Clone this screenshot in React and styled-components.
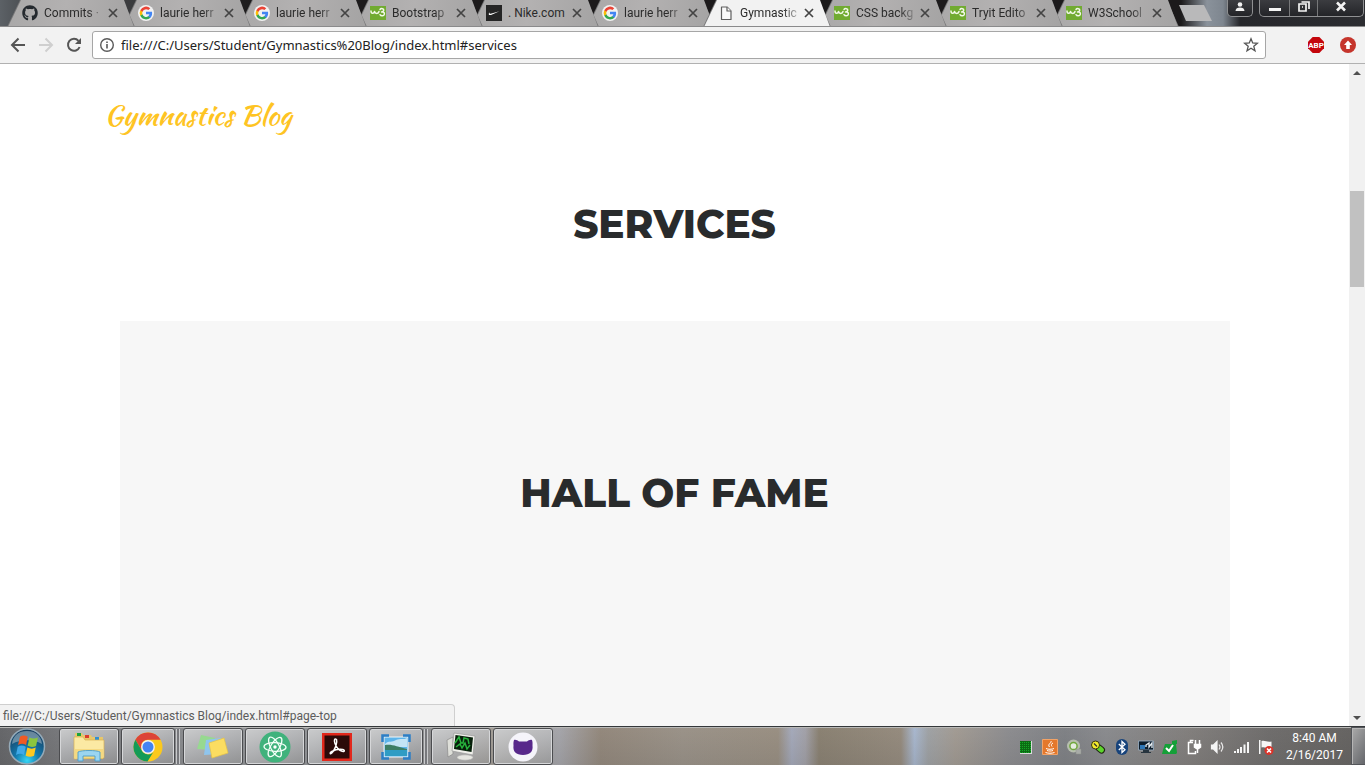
import React from 'react';
import styled, { createGlobalStyle, css } from 'styled-components';
import { FaGithub } from 'react-icons/fa';

const UI_FONT = 'Roboto, "Noto Sans", sans-serif';
const ADDRESS_FONT = '"Noto Sans", "Open Sans", sans-serif';
const HEADING_FONT = 'Montserrat, Inter, "Liberation Sans", sans-serif';
const SCRIPT_FONT = '"Kaushan Script", Lato, "Liberation Sans", cursive';

const GlobalStyle = createGlobalStyle`
  *, *::before, *::after { box-sizing: border-box; }
  body { margin: 0; background: #fff; font-family: ${UI_FONT}; }
  button { padding: 0; border: 0; background: none; font: inherit; color: inherit; }
  h2 { margin: 0; }
  svg { display: block; flex: none; }
`;

const Desktop = styled.div`
  min-height: 100vh;
  display: flex;
  flex-direction: column;
`;

/* ---------- Tab strip ---------- */

const TitleBar = styled.header`
  height: 27px;
  display: flex;
  align-items: stretch;
  padding-left: 7px;
  overflow: hidden;
  background:
    linear-gradient(90deg, #5c6166 0, #4d5155 20px, #38393b 140px, transparent 260px),
    linear-gradient(270deg, #2c2d31 0, #26272b 125px, #7e868f 142px, #8a929b 158px, #1c1a1b 184px, #1c1a1b 100%);
  border-bottom: 1px solid #8a8a8b;
`;

const Tabs = styled.nav`
  display: flex;
  min-width: 0;
`;

const TabBox = styled.div`
  position: relative;
  z-index: ${(p) => (p.$active ? 20 : p.$order)};
  flex: none;
  width: 128px;
  height: 27px;
  margin-right: -12px;
  padding: 0 14px 2px 15px;
  display: flex;
  align-items: center;
  isolation: isolate;

  &::before, &::after {
    content: '';
    position: absolute;
    z-index: -1;
    inset: 0;
    clip-path: polygon(0 100%, 13px 0, 116px 0, 100% 100%);
    background: #777778;
  }
  &::after {
    left: 1px;
    right: 1px;
    background: ${(p) =>
      p.$active ? '#f2f2f2' : 'linear-gradient(100deg, #a9a8a8, #b3b1b1 45%, #a4a3a3)'};
  }
`;

const TabLabel = styled.button`
  display: flex;
  align-items: center;
  gap: 6px;
  flex: 1;
  min-width: 0;
  height: 24px;
  font-size: 12px;
  line-height: 16px;
  color: #2b2b2b;
  text-align: left;
`;

const TabTitle = styled.span`
  flex: 1;
  overflow: hidden;
  white-space: nowrap;
  ${(p) =>
    p.$fade &&
    css`
      mask-image: linear-gradient(90deg, #000 70%, rgba(0, 0, 0, 0.1));
    `}
`;

const CloseButton = styled.button`
  flex: none;
  width: 16px;
  height: 16px;
  display: grid;
  place-items: center;
`;

const NewTab = styled.button`
  flex: none;
  width: 33px;
  height: 16px;
  margin: 5px 0 0 12px;
  background: #b9b9ba;
  clip-path: polygon(0 0, 25px 0, 100% 100%, 7px 100%);
`;

const WindowControls = styled.div`
  display: flex;
  align-items: flex-start;
  gap: 6px;
  margin-left: auto;
  padding-right: 1px;
`;

const ControlGroup = styled.div`
  display: flex;
  height: 17px;
  border: 1px solid #8f9092;
  border-top: 0;
  border-radius: 0 0 5px 5px;
  overflow: hidden;
  background: linear-gradient(#3b3c40, #232428);
`;

const ControlButton = styled.button`
  width: ${(p) => (p.$size === 'wide' ? 46 : p.$size === 'mid' ? 28 : p.$size === 'min' ? 29 : 24)}px;
  display: grid;
  place-items: center;
  padding-bottom: 4px;
  & + & { border-left: 1px solid #77787a; }
`;

/* ---------- Toolbar ---------- */

const Toolbar = styled.div`
  height: 37px;
  display: flex;
  align-items: center;
  padding: 0 9px 0 4px;
  background: #f2f2f2;
  border-bottom: 1px solid #b1b1b1;
`;

const NavButton = styled.button`
  flex: none;
  width: 28px;
  height: 28px;
  display: grid;
  place-items: center;
  color: ${(p) => (p.disabled ? '#cfcfcf' : '#555')};
`;

const AddressBar = styled.form`
  flex: 1;
  min-width: 0;
  height: 28px;
  display: flex;
  align-items: center;
  gap: 6px;
  margin: 0 42px 0 4px;
  padding: 0 6px;
  background: #fff;
  border: 1px solid #a6a6a6;
  border-radius: 3px;
`;

const AddressInput = styled.input`
  flex: 1;
  min-width: 0;
  padding: 0;
  border: 0;
  outline: 0;
  background: none;
  color: #222;
  font: 13px/20px ${ADDRESS_FONT};
`;

const Extensions = styled.div`
  display: flex;
  gap: 16px;
`;

const BareButton = styled.button`
  display: grid;
  place-items: center;
`;

/* ---------- Web page ---------- */

const Viewport = styled.div`
  position: relative;
  flex: 1;
  display: flex;
`;

const Page = styled.main`
  flex: 1;
  min-width: 0;
  display: flex;
  flex-direction: column;
  padding-top: 30px;
  background: #fff;
`;

const Container = styled.div`
  width: 100%;
  max-width: 1170px;
  margin: 0 auto;
  padding: 0 15px;
  line-height: 42px;
`;

const Brand = styled.a`
  display: inline-block;
  vertical-align: top;
  color: #fec423;
  font: 400 28px/42px ${SCRIPT_FONT};
  text-decoration: none;
`;

const SectionHeading = styled.h2`
  color: #292b2c;
  text-align: center;
  font: 800 39px/44px ${HEADING_FONT};
`;

const Services = styled.section`
  padding: 66px 0 75px;
`;

const HallOfFame = styled.section`
  flex: 1;
  width: 100%;
  max-width: 1110px;
  margin: 0 auto;
  padding: 150px 0 64px;
  background: #f7f7f7;
`;

const ScrollTrack = styled.div`
  flex: none;
  width: 16px;
  display: flex;
  flex-direction: column;
  align-items: stretch;
  background: #f1f1f1;
`;

const ScrollArrow = styled.button`
  height: 17px;
  display: grid;
  place-items: center;
`;

const ScrollRail = styled.div`
  flex: 1;
  padding: 110px 1px 0;
`;

const ScrollThumb = styled.div`
  height: 96px;
  background: #c1c1c1;
`;

const StatusBubble = styled.div`
  position: absolute;
  left: 0;
  bottom: 0;
  width: calc(100% / 3);
  height: 22px;
  padding: 0 3px;
  background: #f2f2f2;
  border: solid #cfcfcf;
  border-width: 1px 1px 0 0;
  border-radius: 0 4px 0 0;
  color: #5c5c5c;
  font-size: 12px;
  line-height: 22px;
  white-space: nowrap;
  overflow: hidden;
`;

/* ---------- Taskbar ---------- */

const Taskbar = styled.footer`
  height: 39px;
  display: flex;
  align-items: stretch;
  border-top: 1px solid #35383b;
  box-shadow: inset 0 1px 0 #b9b9b7;
  background:
    linear-gradient(transparent, rgba(60, 60, 60, 0.12)),
    linear-gradient(90deg,
      #66676a 0, #7b7c7f 5%, #97999c 20%, #8c8e92 30%, #a39e97 36%, #a6a6ab 41%,
      #94897d 44%, #9b9389 50%, #9a9083 57%, #a5aabb 58%, #a3a2a9 59%, #8b8273 60%,
      #968c7f 66%, #a9b8cf 67%, #a0a3a6 68%, #a39c94 70%, #8d8d90 74%, #808286 78%,
      #8b8c8f 81%, #83807e 87%, #706e6d 93%, #656361 100%);
`;

const StartButton = styled.button`
  width: 54px;
  flex: none;
  display: grid;
  place-items: center;
`;

const TaskList = styled.div`
  display: flex;
  gap: 2px;
  padding: 1px 0 0 5px;
`;

const TaskButton = styled.button`
  position: relative;
  flex: none;
  width: 60px;
  display: grid;
  place-items: center;
  border: 1px solid #4b4c4f;
  border-radius: 3px;
  box-shadow: inset 0 0 0 1px #d6d7d9;
  background: linear-gradient(160deg, #cacbcc, rgba(185, 186, 188, 0.75) 50%, rgba(150, 150, 150, 0.6));
  ${(p) =>
    p.$stacked &&
    css`
      width: 54px;
      margin-right: 6px;
      &::after {
        content: '';
        position: absolute;
        top: 0;
        bottom: 0;
        right: -6px;
        width: 4px;
        border: solid #c9cacc;
        border-width: 0 1px;
        background: #77787c;
      }
    `}
`;

const Tray = styled.div`
  display: flex;
  align-items: center;
  gap: 8px;
  margin-left: auto;
  padding-top: 1px;
`;

const Clock = styled.time`
  width: 77px;
  padding: 3px 0 0 4px;
  text-align: center;
  color: #fff;
  font-size: 12px;
  line-height: 17px;
  white-space: nowrap;
`;

const ShowDesktop = styled.button`
  width: 14px;
  border: 1px solid #54565a;
  border-right: 0;
  box-shadow: inset 1px 1px 0 #b5b5b5;
  background: linear-gradient(120deg, #aaa, #64666a);
`;

/* ---------- Icons ---------- */

const GoogleIcon = () => (
  <svg width="16" height="16" viewBox="0 0 18 18">
    <circle cx="9" cy="9" r="9" fill="#f2f2f2" />
    <g transform="translate(1.8 1.8) scale(.8)">
      <path fill="#4285f4" d="M17.6 9.2c0-.6-.1-1.2-.2-1.8H9v3.5h4.8a4.1 4.1 0 0 1-1.8 2.7v2.3h2.9c1.7-1.6 2.7-3.9 2.7-6.7z" />
      <path fill="#34a853" d="M9 18c2.4 0 4.5-.8 6-2.2l-3-2.2A5.4 5.4 0 0 1 4 10.7H1V13a9 9 0 0 0 8 5z" />
      <path fill="#fbbc05" d="M4 10.7a5.4 5.4 0 0 1 0-3.4V5H1a9 9 0 0 0 0 8z" />
      <path fill="#ea4335" d="M9 3.6c1.3 0 2.5.5 3.4 1.3L15 2.3A9 9 0 0 0 1 5l3 2.3A5.4 5.4 0 0 1 9 3.6z" />
    </g>
  </svg>
);

const W3Icon = () => (
  <svg width="16" height="16" viewBox="0 0 16 16">
    <path fill="#71ab31" d="M0 1h16v14H0z" />
    <g fill="none" stroke="#f2f8e8" strokeWidth="1.5" strokeLinecap="round" strokeLinejoin="round">
      <path d="M1 6c0 3 3 3 3.500.500C5 9 8.500 9 9 6.500" />
      <path d="M10 4.500c1-1.500 4-1 3.800.800-.1 1.200-1.300 1.500-2.300 1.600 2-.2 3.300.800 2.800 2.500-.5 1.800-3.300 2-4.300.300" />
    </g>
  </svg>
);

const NikeIcon = () => (
  <svg width="16" height="16" viewBox="0 0 16 16">
    <path fill="#252525" d="M0 0h16v16H0z" />
    <path fill="#fff" d="M3.500 7.200C2.200 9 2.500 10.600 5 9.900L13.500 6.200 5.500 8.600C3.900 9 3.200 8.400 3.500 7.200z" />
  </svg>
);

const FileIcon = () => (
  <svg width="16" height="16" viewBox="0 0 16 16" fill="#fafafa" stroke="#5f5f5f" strokeWidth="1.200" strokeLinejoin="round">
    <path d="M3.500 2h5.500l4 4v8.500H3.500z" />
    <path d="M9 2v4h4" />
  </svg>
);

const OctocatIcon = () => <FaGithub size={16} color="#24292e" />;

const CloseIcon = () => (
  <svg width="10" height="10" viewBox="0 0 10 10" stroke="#444" strokeWidth="1.700">
    <path d="M1 1l8 8M9 1L1 9" />
  </svg>
);

const BackIcon = () => (
  <svg width="16" height="16" viewBox="0 0 16 16" fill="none" stroke="currentColor" strokeWidth="2">
    <path d="M15 8H2.500M8.500 1.500L2 8l6.500 6.500" />
  </svg>
);

const ForwardIcon = () => (
  <svg width="16" height="16" viewBox="0 0 16 16" fill="none" stroke="currentColor" strokeWidth="2">
    <path d="M1 8h12.500M7.500 1.500L14 8l-6.500 6.500" />
  </svg>
);

const ReloadIcon = () => (
  <svg width="16" height="16" viewBox="0 0 16 16">
    <path fill="none" stroke="currentColor" strokeWidth="2" d="M13.600 10A6 6 0 1 1 12.500 3.800" />
    <path fill="currentColor" d="M15 1v6H9z" />
  </svg>
);

const InfoIcon = () => (
  <svg width="16" height="16" viewBox="0 0 16 16">
    <circle cx="8" cy="8" r="6.300" fill="none" stroke="#5a5a5a" strokeWidth="1.400" />
    <path fill="#5a5a5a" d="M7.200 7h1.600v4.500H7.200zM7.200 4.400h1.600V6H7.200z" />
  </svg>
);

const StarIcon = () => (
  <svg width="16" height="16" viewBox="0 0 16 16" fill="none" stroke="#555" strokeWidth="1.300">
    <path d="M8 1.800l1.700 4.200 4.700.3-3.600 3 1.200 4.500L8 11.300l-4 2.500 1.200-4.500-3.600-3 4.700-.3z" />
  </svg>
);

const AdblockIcon = () => (
  <svg width="16" height="16" viewBox="0 0 16 16">
    <path fill="#c4060c" d="M4.700 0h6.600L16 4.700v6.600L11.300 16H4.700L0 11.300V4.700z" />
    <text x="8" y="11" fill="#fff" fontSize="8" fontWeight="700" textAnchor="middle" fontFamily="Roboto">ABP</text>
  </svg>
);

const UpdateIcon = () => (
  <svg width="16" height="16" viewBox="0 0 16 16">
    <circle cx="8" cy="8" r="8" fill="#c5352c" />
    <path fill="#fff" d="M8 3.500l4 4.500H9.800v4H6.200V8H4z" />
  </svg>
);

const PersonIcon = () => (
  <svg width="12" height="11" viewBox="0 0 12 11" fill="#f1f1f1">
    <circle cx="6" cy="3.500" r="2.300" />
    <path d="M1.500 10c0-2.500 2-3.500 4.500-3.500s4.500 1 4.500 3.500z" />
  </svg>
);

const MinimizeIcon = () => (
  <svg width="12" height="11" viewBox="0 0 12 11"><path fill="#f4f4f4" d="M0 7h12v3H0z" /></svg>
);

const RestoreIcon = () => (
  <svg width="12" height="11" viewBox="0 0 12 11" fill="none" stroke="#f4f4f4" strokeWidth="1.700">
    <path d="M1 3h7v7H1zM3.500 1h7.500v7M4 6h1" />
  </svg>
);

const WindowCloseIcon = () => (
  <svg width="12" height="11" viewBox="0 0 12 11" stroke="#f4f4f4" strokeWidth="2.600">
    <path d="M2 1.500l8 8M10 1.500l-8 8" />
  </svg>
);

const ArrowGlyph = ({ down }) => (
  <svg width="8" height="4" viewBox="0 0 8 4">
    <path fill="#505050" d={down ? 'M0 0h8L4 4z' : 'M0 4h8L4 0z'} />
  </svg>
);

const StartIcon = () => (
  <svg width="38" height="37" viewBox="0 0 38 37">
    <defs>
      <radialGradient id="orb" cx=".5" cy=".9" r=".85">
        <stop offset="0" stopColor="#36d6f5" />
        <stop offset=".4" stopColor="#147aae" />
        <stop offset="1" stopColor="#153c5e" />
      </radialGradient>
    </defs>
    <circle cx="19" cy="18.500" r="17.500" fill="url(#orb)" stroke="#95aab8" strokeWidth="1.500" />
    <path fill="#9eb4c2" opacity=".6" d="M4 16C5 7 11 3 19 3s14 4 15 13c-9-5-21-5-30 0z" />
    <g transform="translate(-1.500 -2.500) scale(1.120)">
      <path fill="#ef5a24" d="M12 10c2.500-1.600 4.500-1.400 7 0l-1.500 7.500c-2.500-1.500-4.700-1.500-7.200 0z" />
      <path fill="#8cc63e" d="M20.500 10.700c2.600 1.300 5 1.400 7.500 0l-1.600 7.500c-2.500 1.200-5 1.200-7.500-.1z" />
      <path fill="#3fa9e8" d="M10 19c2.500-1.500 4.700-1.400 7.200 0l-1.600 7.300c-2.500-1.500-4.600-1.500-7.100 0z" />
      <path fill="#fdc820" d="M18.600 19.700c2.600 1.300 5 1.400 7.500 0L24.600 27c-2.500 1.300-5 1.200-7.500-.1z" />
    </g>
  </svg>
);

const ExplorerIcon = () => (
  <svg width="32" height="31" viewBox="0 0 32 31">
    <path fill="#e8c76a" d="M2 2h7l1 2h8l1 2h11v22H2z" />
    <path fill="#19a33d" d="M4 2h4v3H4z" />
    <path fill="#d93d2e" d="M12 4h4v3h-4z" />
    <path fill="#318fd1" d="M22 6h4v3h-4z" />
    <path fill="#fbe9a3" stroke="#d8b354" strokeWidth=".700" d="M1 6h9l2 3h19v18l-30 1z" />
    <path fill="#f5d980" d="M2 18h28v9H2z" />
    <path fill="#9bd5f0" stroke="#4c9cc8" strokeWidth=".900" d="M5 21c3-2 19-2 22 0v9h-5v-5H10v5H5z" />
  </svg>
);

const ChromeIcon = () => (
  <svg width="30" height="30" viewBox="0 0 30 30">
    <circle cx="15" cy="15" r="14.500" fill="#fbc91d" />
    <path fill="#dc4437" d="M2.400 7.700A14.500 14.500 0 0 1 27.600 7.700H15a7.200 7.200 0 0 0-6.600 4.300L8.600 18.200z" />
    <path fill="#149b57" d="M2.400 7.700A14.500 14.500 0 0 0 14.500 29.500L21.300 18.500a7 7 0 0 1-12.500.100z" />
    <circle cx="15" cy="15" r="6.900" fill="#f3f3f3" />
    <circle cx="15" cy="15" r="5.500" fill="#4384f3" />
  </svg>
);

const NotesIcon = () => (
  <svg width="34" height="30" viewBox="0 0 34 30">
    <path fill="#97d990" d="M5 3l14 3-2 12-16-1z" />
    <path fill="#90c5ed" d="M10 8l15-2-2 16-15 1z" />
    <path fill="#fbdd61" stroke="#e6c345" strokeWidth=".700" d="M13 11l15-5 4 15-16 5z" />
  </svg>
);

const AtomIcon = () => (
  <svg width="32" height="32" viewBox="0 0 32 32">
    <circle cx="16" cy="16" r="15.500" fill="#40b27c" />
    <g fill="none" stroke="#f3fff8" strokeWidth="1.300">
      <ellipse cx="16" cy="16" rx="4.300" ry="11" transform="rotate(-28 16 16)" />
      <ellipse cx="16" cy="16" rx="4.300" ry="11" transform="rotate(32 16 16)" />
      <ellipse cx="16" cy="16" rx="4.300" ry="11" transform="rotate(92 16 16)" />
    </g>
    <circle cx="16" cy="16" r="1.700" fill="#fff" />
  </svg>
);

const AcrobatIcon = () => (
  <svg width="30" height="28" viewBox="0 0 30 28">
    <path fill="#e2281c" d="M0 0h30v28H0z" />
    <path fill="#2c0a09" d="M2.500 2.500h25v23h-25z" />
    <path fill="none" stroke="#fff" strokeWidth="1.500" d="M14.500 6.500c-1.800-1.600-2.700.500-1.600 3.800 1.400 4 4.300 7.200 7.300 8.100 2.600.7 2.900-1.500.400-1.900-3.500-.5-7.700.4-10.800 2-2.600 1.400-1.700 3.200 0 1.500 3-3.200 6-10 4.700-13.500z" />
  </svg>
);

const PhotoIcon = () => (
  <svg width="30" height="26" viewBox="0 0 30 26">
    <path fill="#5db4ea" stroke="#f3f7f8" d="M3 3h24v20H3z" />
    <path fill="#c4e4f5" d="M4 10c4-4 7-1 11-4 4-2 8 0 11-2v9H4z" />
    <path fill="#3d7e65" d="M4 11c8-1 12 2 22 4v2H4z" />
    <path fill="#2f9cc4" d="M4 16h22v6H4z" />
    <path fill="none" stroke="#2c7fc6" strokeWidth="2.500" d="M1.500 8V1.500H8M22 1.500h6.500V8M28.500 18v6.500H22M8 24.500H1.500V18" />
  </svg>
);

const MonitorIcon = () => (
  <svg width="32" height="30" viewBox="0 0 32 30">
    <path fill="#dedfd9" stroke="#888" strokeWidth=".700" d="M2 8l6-3v17l-5 3z" />
    <path fill="#efefea" stroke="#999" strokeWidth=".700" d="M9 1l21 3-2 19-21-4z" />
    <path fill="#07200b" d="M10.500 3l17.500 2.500L26.500 20 9 17z" />
    <path fill="none" stroke="#27b43c" strokeWidth="1.500" d="M10 11l4-6 2 6h2l1-5 4 1 1 5M11 15l4-3 2 4 3-5 2 6 3-4" />
    <ellipse cx="20" cy="25.500" rx="8" ry="2.700" fill="#e5e5e0" stroke="#aaa" strokeWidth=".600" />
  </svg>
);

const DesktopCatIcon = () => (
  <svg width="30" height="30" viewBox="0 0 30 30">
    <circle cx="15" cy="15" r="14.500" fill="#f5f4fa" />
    <path fill="#58288b" d="M6 8c2-.5 3.500.5 5 1.500h8c1.500-1 3-2 5-1.500.7 2 .6 3.500.5 5.500.8 6-2.500 9.500-9.500 9.500s-10.300-3.500-9.500-9.500C5.400 11.500 5.300 10 6 8z" />
  </svg>
);

const MeterIcon = () => (
  <svg width="16" height="16" viewBox="0 0 16 16">
    <path fill="#0b6a14" d="M2 2h11v12H2z" />
    <path stroke="#dadada" d="M13.500 2v12.500M2 14.500h12" />
    <path stroke="#15a827" strokeDasharray="1 1" d="M2 3.500h11M2 5.500h11M2 7.500h11M2 9.500h11M2 11.500h11M2 13.500h11" />
  </svg>
);

const JavaIcon = () => (
  <svg width="16" height="16" viewBox="0 0 16 16">
    <path fill="#e4782c" stroke="#f2a367" d="M.5.500h15v15H.5z" />
    <path fill="none" stroke="#fff" d="M9 2c1 2-4 3-1.500 6M11 4c-2 1-2 2-1 3.500M4 9.500c2 1 6 1 8 0M5 11.500c2 .7 4 .7 6 0M3.500 13.500c3 1 6 1 9 0" />
  </svg>
);

const DiscIcon = () => (
  <svg width="16" height="16" viewBox="0 0 16 16">
    <circle cx="7.500" cy="7" r="6.500" fill="#b7bfae" />
    <circle cx="7.500" cy="7" r="3.600" fill="#e5ece0" stroke="#70a83c" strokeWidth="1.500" />
    <path fill="#a8aba8" stroke="#8c918b" strokeWidth=".500" d="M10 10h5v5h-5z" />
  </svg>
);

const PillIcon = () => (
  <svg width="16" height="16" viewBox="0 0 16 16">
    <path stroke="#1d2410" strokeWidth="7" strokeLinecap="round" d="M9 9l2.500 2" />
    <path stroke="#5dd52c" strokeWidth="5" strokeLinecap="round" d="M9 9l2.500 2" />
    <circle cx="5.500" cy="6" r="4" fill="#f5ec2d" stroke="#38330c" />
    <path stroke="#333" strokeWidth="1.200" d="M4 4.500l3 3" />
  </svg>
);

const BluetoothIcon = () => (
  <svg width="16" height="16" viewBox="0 0 16 16">
    <rect x="2" width="12" height="16" rx="6" fill="#17437b" />
    <path fill="none" stroke="#fff" strokeWidth="1.300" d="M4.800 5l6.200 5.700-3 2.800v-11l3 2.800L4.800 11" />
  </svg>
);

const DisplayIcon = () => (
  <svg width="16" height="16" viewBox="0 0 16 16">
    <path fill="#0c1d2d" stroke="#9db3c6" strokeWidth=".800" d="M.5 2h15v9H.5z" />
    <path fill="#2f77b7" d="M2 6h5v4H2z" />
    <path fill="none" stroke="#e6eef4" strokeWidth="1.300" d="M8 8V6l3-2v4l3-4v5" />
    <path fill="#26343f" d="M5 11h6v2h2v1H3v-1h2z" />
  </svg>
);

const CheckDriveIcon = () => (
  <svg width="16" height="16" viewBox="0 0 16 16">
    <path fill="#14a038" d="M3 5h7V2l5-1v4h-1l1 9-1 1H0l1-4z" />
    <path fill="none" stroke="#fff" strokeWidth="2" d="M4 9l3 3 4-6" />
  </svg>
);

const PowerIcon = () => (
  <svg width="16" height="16" viewBox="0 0 16 16" fill="none" stroke="#fff" strokeWidth="1.500">
    <path d="M7 3.500H2.500v11h7V12M4.500 3V1.500h3M9.500 1v4M13.500 1v4" />
    <path fill="#fff" d="M8.500 5.500h6V8l-2 1.500h-2l-2-1.500zM11.500 10v4" />
  </svg>
);

const VolumeIcon = () => (
  <svg width="16" height="16" viewBox="0 0 16 16" fill="none" stroke="#f5f5f5" strokeWidth="1.200">
    <path fill="#f5f5f5" d="M1.500 6h2l3.500-3.500v11L3.500 10h-2z" />
    <path d="M9 5.500c1.200 1.500 1.200 3.500 0 5M11 3.500c2.200 2.700 2.200 6.300 0 9" opacity=".9" />
  </svg>
);

const SignalIcon = () => (
  <svg width="16" height="16" viewBox="0 0 16 16" fill="#f5f5f5">
    <path d="M0 12h2v2H0zM3 10h2v4H3zM6 8h2v6H6zM9.500 5.500h2V14h-2zM13 3h2v11h-2z" />
  </svg>
);

const FlagIcon = () => (
  <svg width="16" height="16" viewBox="0 0 16 16">
    <path fill="#f6f6f6" d="M1 1h1.500v14H1zM3.500 2c4-1 5 1.500 10 .5V9c-5 1-6-1.500-10-.5z" />
    <circle cx="11" cy="11.500" r="4.500" fill="#dc3228" />
    <path stroke="#fff" strokeWidth="1.600" d="M9 9.500l4 4M13 9.500l-4 4" />
  </svg>
);

/* ---------- Data ---------- */

const tabs = [
  { title: 'Commits ·', Icon: OctocatIcon },
  { title: 'laurie herr', Icon: GoogleIcon },
  { title: 'laurie herr', Icon: GoogleIcon },
  { title: 'Bootstrap', Icon: W3Icon },
  { title: '. Nike.com', Icon: NikeIcon, full: true },
  { title: 'laurie herr', Icon: GoogleIcon },
  { title: 'Gymnastic', Icon: FileIcon, active: true },
  { title: 'CSS backg', Icon: W3Icon },
  { title: 'Tryit Edito', Icon: W3Icon },
  { title: 'W3School', Icon: W3Icon },
];

const tasks = [
  { name: 'Windows Explorer', Icon: ExplorerIcon },
  { name: 'Google Chrome', Icon: ChromeIcon, stacked: true },
  { name: 'Sticky Notes', Icon: NotesIcon },
  { name: 'Atom', Icon: AtomIcon },
  { name: 'Adobe Acrobat', Icon: AcrobatIcon },
  { name: 'Photo Viewer', Icon: PhotoIcon, stacked: true },
  { name: 'System Monitor', Icon: MonitorIcon },
  { name: 'GitHub Desktop', Icon: DesktopCatIcon },
];

const trayItems = [
  ['Meter', MeterIcon],
  ['Java', JavaIcon],
  ['Disc', DiscIcon],
  ['Connection', PillIcon],
  ['Bluetooth', BluetoothIcon],
  ['Display', DisplayIcon],
  ['Drive status', CheckDriveIcon],
  ['Power', PowerIcon],
  ['Volume', VolumeIcon],
  ['Network', SignalIcon],
  ['Action center', FlagIcon],
];

function Tab({ title, Icon, active, full, order }) {
  return (
    <TabBox $active={active} $order={order}>
      <TabLabel type="button">
        <Icon />
        <TabTitle $fade={!full}>{title}</TabTitle>
      </TabLabel>
      <CloseButton type="button" aria-label={`Close ${title}`}>
        <CloseIcon />
      </CloseButton>
    </TabBox>
  );
}

export default function App() {
  return (
    <Desktop>
      <GlobalStyle />
      <TitleBar>
        <Tabs aria-label="Open tabs">
          {tabs.map((tab, i) => (
            <Tab key={i} {...tab} order={tabs.length - i} />
          ))}
        </Tabs>
        <NewTab type="button" aria-label="New tab" />
        <WindowControls>
          <ControlGroup>
            <ControlButton type="button" aria-label="Profile"><PersonIcon /></ControlButton>
          </ControlGroup>
          <ControlGroup>
            <ControlButton type="button" $size="min" aria-label="Minimize"><MinimizeIcon /></ControlButton>
            <ControlButton type="button" $size="mid" aria-label="Restore"><RestoreIcon /></ControlButton>
            <ControlButton type="button" $size="wide" aria-label="Close window"><WindowCloseIcon /></ControlButton>
          </ControlGroup>
        </WindowControls>
      </TitleBar>

      <Toolbar>
        <NavButton type="button" aria-label="Back"><BackIcon /></NavButton>
        <NavButton type="button" aria-label="Forward" disabled><ForwardIcon /></NavButton>
        <NavButton type="button" aria-label="Reload"><ReloadIcon /></NavButton>
        <AddressBar onSubmit={(e) => e.preventDefault()}>
          <InfoIcon />
          <AddressInput
            type="text"
            aria-label="Address"
            defaultValue="file:///C:/Users/Student/Gymnastics%20Blog/index.html#services"
          />
          <BareButton type="button" aria-label="Bookmark this page"><StarIcon /></BareButton>
        </AddressBar>
        <Extensions>
          <BareButton type="button" aria-label="Adblock Plus"><AdblockIcon /></BareButton>
          <BareButton type="button" aria-label="Update and menu"><UpdateIcon /></BareButton>
        </Extensions>
      </Toolbar>

      <Viewport>
        <Page>
          <Container>
            <Brand href="#page-top">Gymnastics Blog</Brand>
          </Container>
          <Services id="services">
            <SectionHeading>SERVICES</SectionHeading>
          </Services>
          <HallOfFame>
            <SectionHeading>HALL OF FAME</SectionHeading>
          </HallOfFame>
        </Page>
        <ScrollTrack>
          <ScrollArrow type="button" aria-label="Scroll up"><ArrowGlyph /></ScrollArrow>
          <ScrollRail><ScrollThumb /></ScrollRail>
          <ScrollArrow type="button" aria-label="Scroll down"><ArrowGlyph down /></ScrollArrow>
        </ScrollTrack>
        <StatusBubble>file:///C:/Users/Student/Gymnastics Blog/index.html#page-top</StatusBubble>
      </Viewport>

      <Taskbar>
        <StartButton type="button" aria-label="Start"><StartIcon /></StartButton>
        <TaskList>
          {tasks.map(({ name, Icon, stacked }) => (
            <TaskButton key={name} type="button" aria-label={name} $stacked={stacked}>
              <Icon />
            </TaskButton>
          ))}
        </TaskList>
        <Tray>
          {trayItems.map(([name, Icon]) => (
            <BareButton key={name} type="button" aria-label={name}><Icon /></BareButton>
          ))}
        </Tray>
        <Clock>8:40 AM<br />2/16/2017</Clock>
        <ShowDesktop type="button" aria-label="Show desktop" />
      </Taskbar>
    </Desktop>
  );
}
